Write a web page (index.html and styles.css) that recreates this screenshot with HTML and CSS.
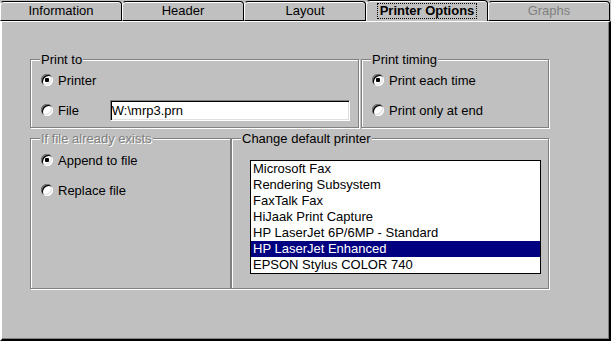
FILE: index.html
```html
<!DOCTYPE html>
<html lang="en">
<head>
    <meta charset="UTF-8">
    <title>Report Properties - Printer Options</title>
    <link rel="stylesheet" href="styles.css">
</head>
<body>
    <div class="dialog">
        <div class="tabs">
            <div class="tab">Information</div>
            <div class="tab">Header</div>
            <div class="tab">Layout</div>
            <div class="tab tab-active"><span class="focus">Printer Options</span></div>
            <div class="tab tab-disabled">Graphs</div>
        </div>

        <div class="panel">
            <div class="groups">
                <div class="group">
                    <div class="group-title">Print to</div>
                    <label class="option">
                        <input type="radio" name="dest" checked>
                        <span>Printer</span>
                    </label>
                    <div class="option">
                        <input type="radio" name="dest" id="destFile">
                        <label class="option-label wide" for="destFile">File</label>
                        <input type="text" class="field" value="W:\mrp3.prn">
                    </div>
                </div>

                <div class="group">
                    <div class="group-title">Print timing</div>
                    <label class="option">
                        <input type="radio" name="timing" checked>
                        <span>Print each time</span>
                    </label>
                    <label class="option">
                        <input type="radio" name="timing">
                        <span>Print only at end</span>
                    </label>
                </div>
            </div>

            <div class="groups groups-lower">
                <div class="group">
                    <div class="group-title disabled">If file already exists</div>
                    <label class="option option-low">
                        <input type="radio" name="exists" checked>
                        <span>Append to file</span>
                    </label>
                    <label class="option">
                        <input type="radio" name="exists">
                        <span>Replace file</span>
                    </label>
                </div>

                <div class="group">
                    <div class="group-title">Change default printer</div>
                    <ul class="listbox">
                        <li>Microsoft Fax</li>
                        <li>Rendering Subsystem</li>
                        <li>FaxTalk Fax</li>
                        <li>HiJaak Print Capture</li>
                        <li>HP LaserJet 6P/6MP - Standard</li>
                        <li class="selected">HP LaserJet Enhanced</li>
                        <li>EPSON Stylus COLOR 740</li>
                    </ul>
                </div>
            </div>
        </div>
    </div>
</body>
</html>
```

FILE: styles.css
```css
* {
    box-sizing: border-box;
}
body {
    margin: 0;
    background: #c0c0c0;
    font-family: 'Liberation Sans', Arial, sans-serif;
    font-size: 13px;
    color: #000000;
}
.dialog {
    width: 611px;
    height: 341px;
}

/* tab strip */
.tabs {
    display: flex;
    height: 21px;
}
.tab {
    width: 122px;
    height: 20px;
    margin-top: 1px;
    border: 1px solid;
    border-color: #000000 #000000 #000000 #ffffff;
    border-radius: 4px 4px 0 0;
    box-shadow: inset 0 1px 0 #ffffff;
    text-align: center;
    line-height: 17px;
}
.tab-active {
    height: 21px;
    margin-top: 0;
    border-bottom: none;
    font-weight: bold;
    line-height: 14px;
}
.focus {
    display: inline-block;
    margin-top: 3px;
    padding: 0 2px;
    outline: 1px dotted #000000;
}
.tab-disabled {
    color: #808080;
}

/* page body */
.panel {
    height: 320px;
    border-top: 1px solid #ffffff;
    border-left: 2px solid #ffffff;
    border-right: 2px solid #000000;
    border-bottom: 2px solid #000000;
    box-shadow: inset -1px -1px 0 #808080;
    padding: 37px 0 0 28px;
}
.groups {
    display: grid;
    grid-template-columns: 329px 188px;
    column-gap: 2px;
}
.groups-lower {
    margin-top: 10px;
    grid-template-columns: 201px 318px;
    column-gap: 0;
}
.group {
    display: flex;
    flex-direction: column;
    border: 1px solid #808080;
    box-shadow: inset 1px 1px 0 #ffffff, 1px 1px 0 #ffffff;
    padding: 0 8px 6px 10px;
}
.group-title {
    align-self: flex-start;
    margin: -8px 0 2px -1px;
    padding: 0 1px;
    line-height: 15px;
    background: #c0c0c0;
}
.group-title.disabled {
    color: #808080;
    text-shadow: 1px 1px 0 #ffffff;
}

/* radio rows */
.option {
    display: flex;
    align-items: center;
    gap: 5px;
    height: 22px;
}
.option + .option {
    margin-top: 8px;
}
.option-low {
    margin-top: 1px;
}
.option-label.wide {
    width: 47px;
}
input[type="radio"] {
    appearance: none;
    -webkit-appearance: none;
    width: 12px;
    height: 12px;
    margin: 0;
    border-radius: 50%;
    background: #ffffff;
    box-shadow: inset 1px 1px 0 #808080, inset -1px -1px 0 #ffffff,
                inset 2px 2px 0 #000000, inset -2px -2px 0 #dfdfdf;
}
input[type="radio"]:checked {
    background: radial-gradient(circle, #000000 0, #000000 2px, #ffffff 2.5px);
}
.field {
    width: 241px;
    height: 21px;
    margin: 0;
    padding: 0 1px;
    border: 1px solid;
    border-color: #808080 #ffffff #ffffff #808080;
    box-shadow: inset 1px 1px 0 #000000, inset -1px -1px 0 #dfdfdf;
    background: #ffffff;
    font-family: inherit;
    font-size: 13px;
    color: #000000;
    outline: none;
}

/* printer list */
.listbox {
    list-style: none;
    margin: 12px 0 8px 8px;
    padding: 0;
    width: 291px;
    border: 1px solid #000000;
    background: #ffffff;
}
.listbox li {
    height: 16px;
    line-height: 16px;
    padding-left: 2px;
    white-space: nowrap;
}
.listbox li.selected {
    background: #000080;
    color: #ffffff;
}
```
